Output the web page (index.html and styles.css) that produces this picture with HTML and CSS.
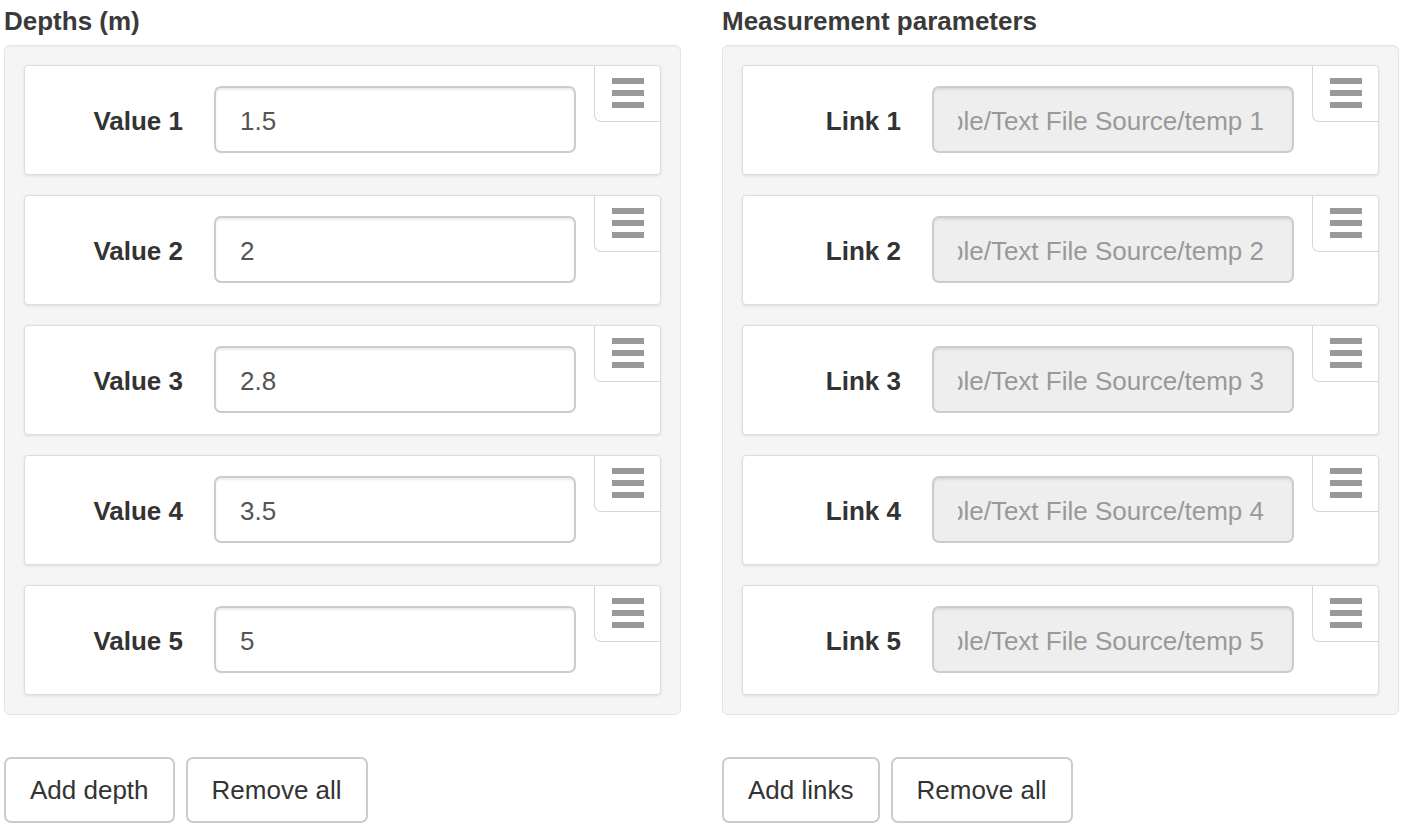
FILE: index.html
```html
<!DOCTYPE html>
<html lang="en">
<head>
<meta charset="utf-8">
<title>Depths and measurement parameters</title>
<link rel="stylesheet" href="styles.css">
</head>
<body>
<div class="page">
  <section class="col">
    <h2 class="col-title">Depths (m)</h2>
    <div class="well">
      <div class="item">
        <div class="field"><label class="field-label">Value 1</label><input class="field-input" type="text" value="1.5"></div>
        <div class="handle"><span class="bar"></span><span class="bar"></span><span class="bar"></span></div>
      </div>
      <div class="item">
        <div class="field"><label class="field-label">Value 2</label><input class="field-input" type="text" value="2"></div>
        <div class="handle"><span class="bar"></span><span class="bar"></span><span class="bar"></span></div>
      </div>
      <div class="item">
        <div class="field"><label class="field-label">Value 3</label><input class="field-input" type="text" value="2.8"></div>
        <div class="handle"><span class="bar"></span><span class="bar"></span><span class="bar"></span></div>
      </div>
      <div class="item">
        <div class="field"><label class="field-label">Value 4</label><input class="field-input" type="text" value="3.5"></div>
        <div class="handle"><span class="bar"></span><span class="bar"></span><span class="bar"></span></div>
      </div>
      <div class="item">
        <div class="field"><label class="field-label">Value 5</label><input class="field-input" type="text" value="5"></div>
        <div class="handle"><span class="bar"></span><span class="bar"></span><span class="bar"></span></div>
      </div>
    </div>
    <div class="actions">
      <button class="btn" type="button">Add depth</button>
      <button class="btn" type="button">Remove all</button>
    </div>
  </section>

  <section class="col">
    <h2 class="col-title">Measurement parameters</h2>
    <div class="well">
      <div class="item">
        <div class="field"><label class="field-label">Link 1</label><div class="field-input is-disabled"><div class="clip"><span>Sample/Text File Source/temp 1</span></div></div></div>
        <div class="handle"><span class="bar"></span><span class="bar"></span><span class="bar"></span></div>
      </div>
      <div class="item">
        <div class="field"><label class="field-label">Link 2</label><div class="field-input is-disabled"><div class="clip"><span>Sample/Text File Source/temp 2</span></div></div></div>
        <div class="handle"><span class="bar"></span><span class="bar"></span><span class="bar"></span></div>
      </div>
      <div class="item">
        <div class="field"><label class="field-label">Link 3</label><div class="field-input is-disabled"><div class="clip"><span>Sample/Text File Source/temp 3</span></div></div></div>
        <div class="handle"><span class="bar"></span><span class="bar"></span><span class="bar"></span></div>
      </div>
      <div class="item">
        <div class="field"><label class="field-label">Link 4</label><div class="field-input is-disabled"><div class="clip"><span>Sample/Text File Source/temp 4</span></div></div></div>
        <div class="handle"><span class="bar"></span><span class="bar"></span><span class="bar"></span></div>
      </div>
      <div class="item">
        <div class="field"><label class="field-label">Link 5</label><div class="field-input is-disabled"><div class="clip"><span>Sample/Text File Source/temp 5</span></div></div></div>
        <div class="handle"><span class="bar"></span><span class="bar"></span><span class="bar"></span></div>
      </div>
    </div>
    <div class="actions">
      <button class="btn" type="button">Add links</button>
      <button class="btn" type="button">Remove all</button>
    </div>
  </section>
</div>
</body>
</html>
```

FILE: styles.css
```css
* { box-sizing: border-box; }

html, body {
  margin: 0;
  padding: 0;
  background: #ffffff;
}

body {
  font-family: "Liberation Sans", Arial, Helvetica, sans-serif;
  font-size: 26px;
  color: #333333;
}

.page {
  display: grid;
  grid-template-columns: 677px 677px;
  column-gap: 41px;
  padding-left: 4px;
}

.col {
  display: flex;
  flex-direction: column;
}

.col-title {
  margin: 0;
  height: 45px;
  line-height: 42px;
  font-size: 26px;
  font-weight: bold;
  color: #3a3a3a;
}

.well {
  background: #f5f5f5;
  border: 1px solid #e3e3e3;
  border-radius: 6px;
  padding: 19px;
  display: flex;
  flex-direction: column;
  gap: 20px;
  box-shadow: inset 0 1px 1px rgba(0, 0, 0, 0.03);
}

.item {
  display: flex;
  align-items: flex-start;
  height: 110px;
  background: #ffffff;
  border: 1px solid #dddddd;
  border-radius: 4px;
  box-shadow: 0 1px 3px rgba(0, 0, 0, 0.1);
}

.field {
  display: flex;
  align-items: center;
  padding: 20px 0 21px 0;
}

.field-label {
  width: 158px;
  margin-right: 31px;
  padding-top: 4px;
  text-align: right;
  font-weight: bold;
  color: #333333;
}

.field-input {
  width: 362px;
  height: 67px;
  border: 2px solid #cccccc;
  border-radius: 7px;
  padding: 4px 24px 0 24px;
  font-family: inherit;
  font-size: 26px;
  color: #555555;
  background: #ffffff;
  box-shadow: inset 0 2px 2px rgba(0, 0, 0, 0.075);
  outline: none;
}

.field-input.is-disabled {
  display: flex;
  align-items: center;
  background: #eeeeee;
  color: #999999;
  padding: 4px 28px 0 24px;
}

.clip {
  flex: 1;
  display: flex;
  justify-content: flex-end;
  overflow: hidden;
  white-space: nowrap;
}

.clip span {
  flex: none;
}

.handle {
  margin-left: auto;
  width: 66px;
  height: 56px;
  border-left: 1px solid #d6d6d6;
  border-bottom: 1px solid #d6d6d6;
  border-bottom-left-radius: 7px;
  display: flex;
  flex-direction: column;
  align-items: center;
  gap: 6px;
  padding-top: 12px;
}

.bar {
  display: block;
  width: 32px;
  height: 6px;
  background: #999999;
}

.actions {
  display: flex;
  gap: 11px;
  margin-top: 42px;
}

.btn {
  height: 66px;
  padding: 0 24px;
  border: 2px solid #cccccc;
  border-radius: 7px;
  background: #ffffff;
  font-family: inherit;
  font-size: 26px;
  color: #333333;
  cursor: pointer;
}
```
